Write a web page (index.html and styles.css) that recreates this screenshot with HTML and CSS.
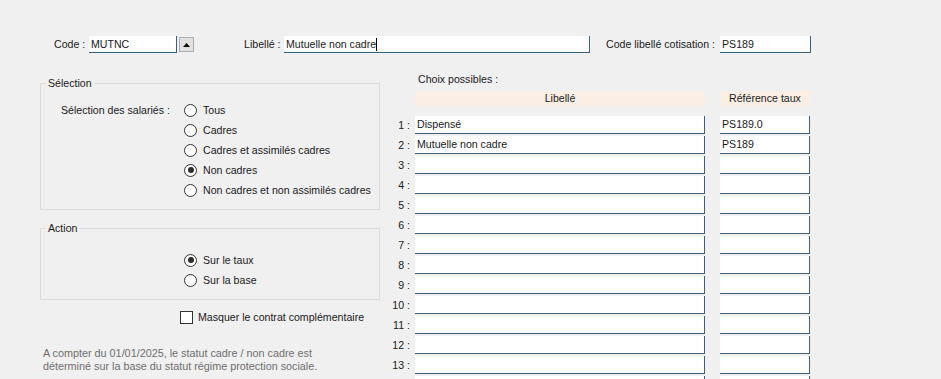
FILE: index.html
```html
<!DOCTYPE html>
<html>
<head>
<meta charset="utf-8">
<title>Contrat complémentaire</title>
<link rel="stylesheet" href="styles.css">
</head>
<body>
<div class="window">

	<div class="toprow">
		<span class="lbl lbl-code">Code :</span>
		<div class="field f-code">MUTNC</div>
		<div class="spin">
			<svg width="7" height="4" viewBox="0 0 7 4"><path d="M0 4 L3.5 0 L7 4 Z" fill="#000"/></svg>
		</div>
		<span class="lbl lbl-libelle">Libellé :</span>
		<div class="field f-libelle">Mutuelle non cadre<span class="caret"></span></div>
		<span class="lbl lbl-cotis">Code libellé cotisation :</span>
		<div class="field f-cotis">PS189</div>
	</div>

	<div class="main">
		<div class="left">
			<fieldset class="group g-selection">
				<legend>Sélection</legend>
				<div class="sel-row">
					<span class="sel-label">Sélection des salariés :</span>
					<div class="radios">
						<div class="radio"><span class="dot"></span>Tous</div>
						<div class="radio"><span class="dot"></span>Cadres</div>
						<div class="radio"><span class="dot"></span>Cadres et assimilés cadres</div>
						<div class="radio"><span class="dot on"></span>Non cadres</div>
						<div class="radio"><span class="dot"></span>Non cadres et non assimilés cadres</div>
					</div>
				</div>
			</fieldset>

			<fieldset class="group g-action">
				<legend>Action</legend>
				<div class="radios">
					<div class="radio"><span class="dot on"></span>Sur le taux</div>
					<div class="radio"><span class="dot"></span>Sur la base</div>
				</div>
			</fieldset>

			<div class="check"><span class="box"></span>Masquer le contrat complémentaire</div>

			<p class="note">A compter du 01/01/2025, le statut cadre / non cadre est<br>déterminé sur la base du statut régime protection sociale.</p>
		</div>

		<div class="right">
			<div class="choix-title">Choix possibles :</div>
			<div class="grid">
				<span></span>
				<div class="th th-lib">Libellé</div>
				<div class="th th-ref">Référence taux</div>

				<span class="num">1 :</span><div class="field cell-lib">Dispensé</div><div class="field cell-ref">PS189.0</div>
				<span class="num">2 :</span><div class="field cell-lib">Mutuelle non cadre</div><div class="field cell-ref">PS189</div>
				<span class="num">3 :</span><div class="field cell-lib"></div><div class="field cell-ref"></div>
				<span class="num">4 :</span><div class="field cell-lib"></div><div class="field cell-ref"></div>
				<span class="num">5 :</span><div class="field cell-lib"></div><div class="field cell-ref"></div>
				<span class="num">6 :</span><div class="field cell-lib"></div><div class="field cell-ref"></div>
				<span class="num">7 :</span><div class="field cell-lib"></div><div class="field cell-ref"></div>
				<span class="num">8 :</span><div class="field cell-lib"></div><div class="field cell-ref"></div>
				<span class="num">9 :</span><div class="field cell-lib"></div><div class="field cell-ref"></div>
				<span class="num">10 :</span><div class="field cell-lib"></div><div class="field cell-ref"></div>
				<span class="num">11 :</span><div class="field cell-lib"></div><div class="field cell-ref"></div>
				<span class="num">12 :</span><div class="field cell-lib"></div><div class="field cell-ref"></div>
				<span class="num">13 :</span><div class="field cell-lib"></div><div class="field cell-ref"></div>
				<span class="num"></span><div class="field cell-lib"></div><div class="field cell-ref"></div>
			</div>
		</div>
	</div>

</div>
</body>
</html>
```

FILE: styles.css
```css
html,
body {
	margin: 0;
	height: 379px;
	overflow: hidden;
}
body {
	background: #f0f0f0;
	font-family: "Liberation Sans", Arial, sans-serif;
	font-size: 10.6px;
	color: #1a1a1a;
}
.window {
	padding-top: 36px;
}

/* ligne du haut */
.toprow {
	display: flex;
	align-items: flex-start;
	padding-left: 54px;
	height: 17px;
}
.lbl {
	line-height: 17px;
	white-space: nowrap;
}
.lbl-code {
	width: 35px;
}
.lbl-libelle {
	width: 40px;
	margin-left: 50px;
}
.lbl-cotis {
	width: 114px;
	margin-left: 16px;
}
.field {
	box-sizing: border-box;
	height: 18px;
	line-height: 17px;
	padding-left: 2px;
	background: #fff;
	border-right: 1px solid #3b6078;
	border-bottom: 1px solid #3b6078;
	white-space: nowrap;
	overflow: hidden;
}
.toprow .field {
	height: 17px;
	line-height: 16px;
}
.f-code {
	width: 88px;
}
.f-libelle {
	width: 306px;
}
.f-cotis {
	width: 91px;
}
.caret {
	display: inline-block;
	width: 1px;
	height: 13px;
	background: #000;
	vertical-align: -3px;
}
.spin {
	box-sizing: border-box;
	width: 15px;
	height: 15px;
	margin: 1px 0 0 2px;
	background: #e1e1e1;
	border: 1px solid #adadad;
	display: flex;
	align-items: center;
	justify-content: center;
}

/* partie principale */
.main {
	display: flex;
	margin-top: 19px;
	padding-left: 40px;
}
.left {
	width: 340px;
}
.group {
	margin: 4px 0 0;
	padding: 0 0 9px 20px;
	border: 1px solid #dcdcdc;
	min-width: 0;
}
.group legend {
	padding: 0 2px;
	margin-left: -15px;
	line-height: 14px;
}
.g-selection .sel-row {
	display: flex;
	padding-top: 10px;
}
.sel-label {
	width: 123px;
	line-height: 20px;
	white-space: nowrap;
}
.radio {
	display: flex;
	align-items: center;
	height: 20px;
	white-space: nowrap;
}
.dot {
	box-sizing: border-box;
	width: 13px;
	height: 13px;
	margin-right: 6px;
	border: 1px solid #333;
	border-radius: 50%;
	background: #fff;
	display: flex;
	align-items: center;
	justify-content: center;
}
.dot.on:after {
	content: "";
	width: 6px;
	height: 6px;
	border-radius: 50%;
	background: #2b2b2b;
}
.g-action {
	margin-top: 11px;
}
.g-action .radios {
	padding: 15px 0 0 123px;
}
.check {
	display: flex;
	align-items: center;
	height: 20px;
	margin: 7px 0 0 140px;
	white-space: nowrap;
}
.box {
	box-sizing: border-box;
	width: 13px;
	height: 13px;
	margin-right: 5px;
	border: 1px solid #333;
	background: #fff;
}
.note {
	margin: 20px 0 0 3px;
	font-size: 10.8px;
	line-height: 13px;
	color: #6e6e6e;
	white-space: nowrap;
}

/* choix possibles */
.right {
	margin-left: 1px;
}
.choix-title {
	padding-left: 37px;
	line-height: 14px;
}
.grid {
	display: grid;
	grid-template-columns: 34px 305px 90px;
	row-gap: 2px;
	margin-top: 5px;
}
.th {
	height: 15px;
	line-height: 15px;
	background: #fbefe5;
	text-align: center;
	margin-bottom: 8px;
}
.th-lib {
	width: 290px;
}
.num {
	text-align: right;
	padding-right: 5px;
	line-height: 18px;
	white-space: nowrap;
}
.cell-lib {
	width: 290px;
}
.cell-ref {
	width: 90px;
}
```
